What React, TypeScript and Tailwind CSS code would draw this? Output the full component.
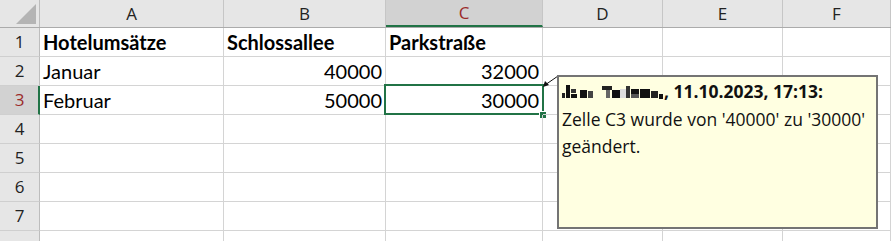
import React from "react";

const COLS = [
  { key: "A", w: "w-[184px]" },
  { key: "B", w: "w-[162px]" },
  { key: "C", w: "w-[157px]" },
  { key: "D", w: "w-[120px]" },
  { key: "E", w: "w-[120px]" },
  { key: "F", w: "flex-1" },
];

type Cell = { text?: string; bold?: boolean; right?: boolean };

const ROWS: Cell[][] = [
  [{ text: "Hotelumsätze", bold: true }, { text: "Schlossallee", bold: true }, { text: "Parkstraße", bold: true }],
  [{ text: "Januar" }, { text: "40000", right: true }, { text: "32000", right: true }],
  [{ text: "Februar" }, { text: "50000", right: true }, { text: "30000", right: true }],
  [],
  [],
  [],
  [],
  [],
];

const HEAD_FONT = "font-['Open_Sans','Noto_Sans',sans-serif]";
const CELL_FONT = "font-['Lato','Liberation_Sans',sans-serif]";

// redacted author name, pixelated like in the screenshot
function Redacted() {
  return (
    <svg width="108" height="14" viewBox="0 0 108 14" className="shrink-0">
      <rect x="0" y="8" width="3" height="5" fill="#222" />
      <rect x="4" y="0" width="4" height="13" fill="#111" />
      <rect x="9" y="4" width="5" height="4" fill="#333" />
      <rect x="9" y="9" width="6" height="4" fill="#111" />
      <rect x="18" y="5" width="7" height="8" fill="#111" />
      <rect x="26" y="6" width="5" height="7" fill="#444" />
      <rect x="40" y="1" width="10" height="4" fill="#222" />
      <rect x="44" y="5" width="4" height="8" fill="#666" />
      <rect x="50" y="5" width="8" height="8" fill="#111" />
      <rect x="58" y="4" width="6" height="9" fill="#ddd" />
      <rect x="64" y="1" width="4" height="12" fill="#333" />
      <rect x="69" y="4" width="8" height="5" fill="#111" />
      <rect x="69" y="9" width="8" height="4" fill="#555" />
      <rect x="78" y="4" width="10" height="9" fill="#111" />
      <rect x="89" y="6" width="7" height="7" fill="#222" />
      <rect x="97" y="9" width="4" height="5" fill="#111" />
    </svg>
  );
}

export default function App() {
  return (
    <div className="relative w-[891px] h-[241px] overflow-hidden bg-white select-none">
      {/* column header row */}
      <div className="flex h-[28px] bg-[#e6e6e6] border-b border-[#ababab]">
        <div className="w-[40px] h-full border-r border-[#bdbdbd] flex items-end justify-end pr-[3px] pb-[3px]">
          <svg width="20" height="20" viewBox="0 0 20 20">
            <polygon points="20,0 20,20 0,20" fill="#b4b4b4" />
          </svg>
        </div>
        {COLS.map((c) => {
          const sel = c.key === "C";
          return (
            <div
              key={c.key}
              className={`${c.w} h-full flex items-center justify-center border-r border-[#c6c6c6] text-[17px] ${HEAD_FONT} ${
                sel ? "bg-[#d2d2d2] text-[#9b2a2a] border-b-2 border-b-[#217346] -mb-px" : "text-[#222]"
              }`}
            >
              {c.key}
            </div>
          );
        })}
      </div>

      {ROWS.map((row, ri) => {
        const sel = ri === 2;
        return (
          <div key={ri} className="flex h-[29px]">
            <div
              className={`w-[40px] h-full flex items-center justify-center border-b border-[#cfcfcf] text-[17px] ${HEAD_FONT} ${
                sel
                  ? "bg-[#d2d2d2] text-[#9b2a2a] border-r-2 border-r-[#217346] pl-[1px]"
                  : "bg-[#e6e6e6] text-[#222] border-r border-r-[#bdbdbd]"
              }`}
            >
              {ri < 7 ? ri + 1 : ""}
            </div>
            {COLS.map((c, ci) => {
              const cell = row[ci];
              const active = sel && c.key === "C";
              return (
                <div
                  key={c.key}
                  className={`${c.w} relative h-full border-r border-b border-[#d4d4d4] flex items-center px-[3px] text-[20px] text-black ${CELL_FONT} ${
                    cell?.right ? "justify-end" : "justify-start"
                  } ${cell?.bold ? "font-bold" : ""}`}
                >
                  {cell?.text}
                  {active && (
                    <>
                      <div className="absolute -left-[2px] -top-[2px] -right-[2px] -bottom-[1px] border-2 border-[#217346]" />
                      <div className="absolute -right-[5px] -bottom-[5px] w-[8px] h-[8px] bg-[#217346] border border-white" />
                    </>
                  )}
                </div>
              );
            })}
          </div>
        );
      })}

      {/* comment connector */}
      <svg className="absolute left-0 top-0 pointer-events-none" width="891" height="241">
        <line x1="545" y1="85" x2="558" y2="76" stroke="#111" strokeWidth="1" />
        <polygon points="543,87 549,85 545,81" fill="#111" />
      </svg>

      {/* comment box */}
      <div className="absolute left-[557px] top-[75px] w-[321px] h-[154px] bg-[#ffffe1] border-2 border-[#747474] pl-[3px] pt-[1px] font-['Open_Sans','Noto_Sans',sans-serif] text-[17.5px] leading-[27.5px] text-[#111]">
        <div className="flex items-center font-bold">
          <Redacted />
          <span className="-ml-[6px]">, 11.10.2023, 17:13:</span>
        </div>
        <div>Zelle C3 wurde von '40000' zu '30000'</div>
        <div>geändert.</div>
      </div>
    </div>
  );
}
